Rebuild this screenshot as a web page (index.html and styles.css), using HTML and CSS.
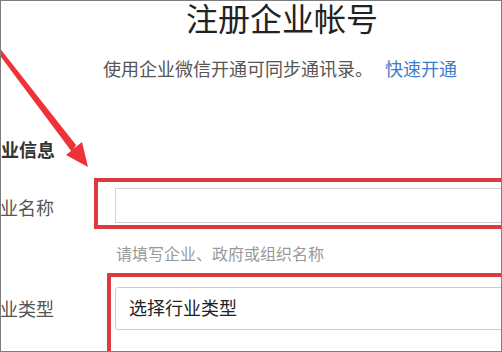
FILE: index.html
```html
<!DOCTYPE html>
<html lang="zh-CN">
<head>
    <meta charset="UTF-8">
    <meta name="viewport" content="width=device-width, initial-scale=1.0">
    <title>注册企业帐号</title>
    <link rel="stylesheet" href="styles.css">
</head>
<body>

    <div class="frame">
        <div class="page">
            <h1 class="title">注册企业帐号</h1>
            <p class="subtitle">使用企业微信开通可同步通讯录。<a class="link" href="#">快速开通</a></p>

            <h2 class="section">企业信息</h2>

            <div class="row">
                <label class="label" for="corp-name">企业名称</label>
                <div class="field mark-name">
                    <input type="text" id="corp-name" class="input" />
                </div>
            </div>
            <p class="hint">请填写企业、政府或组织名称</p>

            <div class="row row-type">
                <label class="label">企业类型</label>
                <div class="field mark-type">
                    <div class="select">选择行业类型</div>
                </div>
            </div>
        </div>

        <svg class="arrow" width="100" height="180" viewBox="0 0 100 180">
            <polygon points="-6,48 -3,45 75,144 71,151" fill="#ee3238" />
            <polygon points="81,141 65,154 87,166" fill="#ee3238" />
        </svg>
    </div>

</body>
</html>
```

FILE: styles.css
```css
* {
    margin: 0;
    padding: 0;
    box-sizing: border-box;
}

body {
    font-family: "Noto Sans CJK SC", "Noto Sans", sans-serif;
    background-color: #fff;
    color: #333;
}

.frame {
    position: relative;
    width: 502px;
    height: 352px;
    border: 1px solid #7d7d7d;
    overflow: hidden;
}

.page {
    width: 646px;
    margin-left: -42px;
}

.title {
    font-size: 32px;
    font-weight: normal;
    line-height: 32px;
    text-align: center;
    color: #222;
}

.subtitle {
    margin-top: 23px;
    padding-right: 4px;
    font-size: 18px;
    line-height: 24px;
    text-align: center;
    color: #555;
}

.link {
    margin-left: 12px;
    color: #3a7dc9;
    text-decoration: none;
}

.section {
    margin-top: 57px;
    padding-left: 24px;
    font-size: 18px;
    font-weight: bold;
    line-height: 24px;
    color: #333;
}

.row {
    display: flex;
    gap: 61px;
    margin-top: 27px;
}

.row-type {
    margin-top: 23px;
}

.label {
    width: 95px;
    flex-shrink: 0;
    padding-top: 2px;
    font-size: 18px;
    line-height: 35px;
    text-align: right;
    color: #555;
}

.row-type .label {
    padding-top: 0;
    line-height: 43px;
}

.field {
    position: relative;
    width: 460px;
}

.input {
    display: block;
    width: 100%;
    height: 35px;
    border: 1px solid #cfd3d8;
    background-color: #fff;
    outline: none;
}

.select {
    height: 43px;
    padding-left: 13px;
    border: 1px solid #cdcdcd;
    border-radius: 3px;
    background-color: #fff;
    font-size: 18px;
    line-height: 39px;
    color: #222;
}

.hint {
    margin-top: 17px;
    padding-left: 157px;
    font-size: 16px;
    line-height: 22px;
    color: #999;
}

/* red annotation boxes drawn over the fields */
.mark-name::after,
.mark-type::after {
    content: "";
    position: absolute;
    border: 4px solid #dc3a40;
}

.mark-name::after {
    top: -10px;
    left: -21px;
    right: -100px;
    bottom: -4px;
}

.mark-type::after {
    top: -14px;
    left: -8px;
    right: -100px;
    bottom: -80px;
}

.arrow {
    position: absolute;
    top: 0;
    left: 0;
}
```
